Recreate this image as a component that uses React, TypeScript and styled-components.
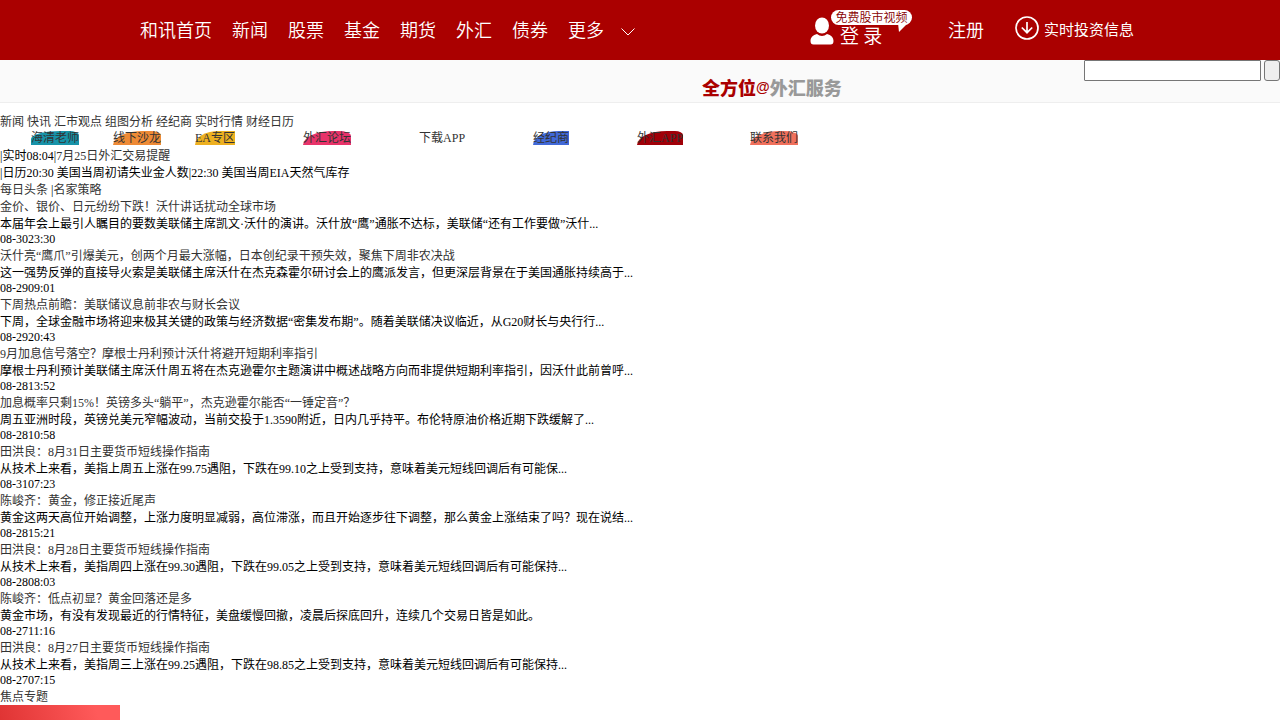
import React from "react";
import styled, { createGlobalStyle } from "styled-components";

const GlobalStyle = createGlobalStyle`
  body {
    margin: 0;
    background: #fff;
    color: #000;
    font: 12px/17px "Liberation Serif", "Noto Sans CJK SC", serif;
  }
  a { color: #333; text-decoration: none; }
  h1, h2, p, ul { margin: 0; padding: 0; font-size: inherit; font-weight: inherit; }
  ul { list-style: none; }
`;

const TopBar = styled.header`
  background: #a00;
  font-family: "Noto Sans CJK SC", sans-serif;
`;

const TopInner = styled.div`
  box-sizing: border-box;
  max-width: 1000px;
  height: 60px;
  margin: 0 auto;
  padding-bottom: 2px;
  display: flex;
  align-items: center;
  justify-content: space-between;
`;

const TopNav = styled.nav`
  display: flex;
  align-items: center;
  gap: 20px;
`;

const TopLink = styled.a`
  color: #fff;
  font-size: 18px;
  line-height: 58px;
  font-weight: 350;
`;

const MoreButton = styled.button`
  display: flex;
  align-items: center;
  gap: 17px;
  padding: 0;
  border: 0;
  background: none;
  color: #fff;
  font: 350 18px/58px "Noto Sans CJK SC", sans-serif;
`;

const Account = styled.div`
  display: flex;
  align-items: center;
  margin-right: 6px;
`;

const Login = styled.a`
  box-sizing: border-box;
  position: relative;
  display: flex;
  align-items: flex-end;
  gap: 6px;
  width: 138px;
  height: 38px;
  padding-bottom: 3px;
  color: #fff;
  font-size: 19px;
  font-weight: 350;
  line-height: 20px;
`;

const Bubble = styled.span`
  position: absolute;
  left: 21px;
  top: 0;
  width: 81px;
  height: 15px;
  border-radius: 8px;
  background: #fff;
  color: #800;
  font-size: 12px;
  line-height: 14px;
  text-align: center;
`;

const BubbleTail = styled.svg`
  position: absolute;
  left: 87px;
  top: 13px;
`;

const Download = styled.a`
  display: flex;
  align-items: center;
  gap: 5px;
  margin-left: 31px;
  color: #fff;
  font-size: 15px;
  line-height: 20px;
`;

const SubBar = styled.div`
  display: flex;
  justify-content: flex-end;
  background: #fafafa;
  border-bottom: 1px solid #eee;
  height: 42px;
`;

const Slogan = styled.h1`
  && { font: 900 18px/26px "Noto Sans CJK SC", serif; }
  display: flex;
  padding-top: 14px;
  color: #a00;
  margin-right: auto;
  margin-left: 702px;
`;

const SloganAt = styled.span`
  font: bold 14px/26px "Liberation Sans", sans-serif;
`;

const SloganRest = styled.span`
  color: #999;
`;

const Search = styled.form`
  display: flex;
  align-items: flex-start;
  gap: 3px;
`;

const SearchInput = styled.input`
  box-sizing: border-box;
  width: 177px;
  height: 21px;
  margin: 0;
  border: 1px solid #767676;
  border-radius: 1px;
`;

const SearchButton = styled.button`
  box-sizing: border-box;
  width: 16px;
  height: 21px;
  padding: 0;
  border: 1px solid #767676;
  border-radius: 3px;
  background: #efefef;
`;

const Main = styled.main`
  padding-top: 11px;
`;

const Row = styled.div`
  min-height: 17px;
`;

const Services = styled.nav`
  display: flex;
  align-items: flex-start;
  height: 17px;
  padding-left: 31px;
`;

const Service = styled.a<{ $tint: string; $curve: string; $gap: number }>`
  height: 14px;
  line-height: 14px;
  margin-right: ${(p) => p.$gap}px;
  background: ${(p) => p.$tint};
  border-radius: ${(p) => p.$curve};
`;

const Time = styled.p`
  padding-bottom: 2px;
  line-height: 13px;
`;

const TopicTitle = styled.h2`
  line-height: 16px;
`;

const TopicBanner = styled.div`
  width: 120px;
  height: 15px;
  background: linear-gradient(75deg, #e03434, #ff5a5a 80%);
`;

const sections = ["和讯首页", "新闻", "股票", "基金", "期货", "外汇", "债券"];
const channels = ["新闻", "快讯", "汇市观点", "组图分析", "经纪商", "实时行情", "财经日历"];

const services = [
  { name: "海清老师", tint: "#1793a9", curve: "30px 10px 0 0 / 8px 4px 0 0", gap: 34 },
  { name: "线下沙龙", tint: "#ee8a35", curve: "30px 10px 0 0 / 14px 4px 0 0", gap: 34 },
  { name: "EA专区", tint: "#edb020", curve: "24px 0 0 0 / 14px 0 0 0", gap: 68 },
  { name: "外汇论坛", tint: "#e8336a", curve: "30px 12px 0 0 / 14px 5px 0 0", gap: 68 },
  { name: "下载APP", tint: "transparent", curve: "0", gap: 68 },
  { name: "经纪商", tint: "#4169d8", curve: "26px 0 0 0 / 14px 0 0 0", gap: 68 },
  { name: "外汇APP", tint: "#a00008", curve: "30px 8px 0 0 / 14px 4px 0 0", gap: 67 },
  { name: "联系我们", tint: "#f0705c", curve: "30px 14px 0 0 / 14px 5px 0 0", gap: 0 },
];

const articles = [
  ["金价、银价、日元纷纷下跌！沃什讲话扰动全球市场", "本届年会上最引人瞩目的要数美联储主席凯文·沃什的演讲。沃什放“鹰”通胀不达标，美联储“还有工作要做”沃什...", "08-3023:30"],
  ["沃什亮“鹰爪”引爆美元，创两个月最大涨幅，日本创纪录干预失效，聚焦下周非农决战", "这一强势反弹的直接导火索是美联储主席沃什在杰克森霍尔研讨会上的鹰派发言，但更深层背景在于美国通胀持续高于...", "08-2909:01"],
  ["下周热点前瞻：美联储议息前非农与财长会议", "下周，全球金融市场将迎来极其关键的政策与经济数据“密集发布期”。随着美联储决议临近，从G20财长与央行行...", "08-2920:43"],
  ["9月加息信号落空？摩根士丹利预计沃什将避开短期利率指引", "摩根士丹利预计美联储主席沃什周五将在杰克逊霍尔主题演讲中概述战略方向而非提供短期利率指引，因沃什此前曾呼...", "08-2813:52"],
  ["加息概率只剩15%！英镑多头“躺平”，杰克逊霍尔能否“一锤定音”？", "周五亚洲时段，英镑兑美元窄幅波动，当前交投于1.3590附近，日内几乎持平。布伦特原油价格近期下跌缓解了...", "08-2810:58"],
  ["田洪良：8月31日主要货币短线操作指南", "从技术上来看，美指上周五上涨在99.75遇阻，下跌在99.10之上受到支持，意味着美元短线回调后有可能保...", "08-3107:23"],
  ["陈峻齐：黄金，修正接近尾声", "黄金这两天高位开始调整，上涨力度明显减弱，高位滞涨，而且开始逐步往下调整，那么黄金上涨结束了吗？现在说结...", "08-2815:21"],
  ["田洪良：8月28日主要货币短线操作指南", "从技术上来看，美指周四上涨在99.30遇阻，下跌在99.05之上受到支持，意味着美元短线回调后有可能保持...", "08-2808:03"],
  ["陈峻齐：低点初显？黄金回落还是多", "黄金市场，有没有发现最近的行情特征，美盘缓慢回撤，凌晨后探底回升，连续几个交易日皆是如此。", "08-2711:16"],
  ["田洪良：8月27日主要货币短线操作指南", "从技术上来看，美指周三上涨在99.25遇阻，下跌在98.85之上受到支持，意味着美元短线回调后有可能保持...", "08-2707:15"],
];

export default function App() {
  return (
    <>
      <GlobalStyle />
      <TopBar>
        <TopInner>
          <TopNav>
            {sections.map((s) => (
              <TopLink href="#" key={s}>{s}</TopLink>
            ))}
            <MoreButton type="button">
              更多
              <svg width="14" height="13" viewBox="0 0 14 13" fill="none" stroke="#fff">
                <path d="M.5 5.500 7 12l6.500-6.500" />
              </svg>
            </MoreButton>
          </TopNav>
          <Account>
            <Login href="#">
              <svg width="24" height="28" viewBox="0 0 24 28" fill="#fff">
                <ellipse cx="12" cy="8.500" rx="7" ry="8" />
                <path d="M7 17c3 2.500 7 2.500 10 0 4 1 6.500 3.500 6.500 7 0 2.500-1 3.500-3 3.500H3.500C1.500 27.500.5 26.500.5 24c0-3.500 2.500-6 6.500-7Z" />
              </svg>
              登 录
              <Bubble>免费股市视频</Bubble>
              <BubbleTail width="12" height="9" viewBox="0 0 12 9" fill="#fff">
                <path d="M1 0h10L2 9Z" />
              </BubbleTail>
            </Login>
            <TopLink href="#">注册</TopLink>
            <Download href="#">
              <svg width="24" height="26" viewBox="0 0 24 26" fill="none" stroke="#fff" strokeWidth="1.700">
                <circle cx="12" cy="12" r="11" />
                <path d="M12 6v11M6.800 11.500 12 16.700l5.200-5.200" />
              </svg>
              实时投资信息
            </Download>
          </Account>
        </TopInner>
      </TopBar>
      <SubBar>
        <Slogan>全方位<SloganAt>@</SloganAt><SloganRest>外汇服务</SloganRest></Slogan>
        <Search>
          <SearchInput type="text" aria-label="搜索" />
          <SearchButton type="button" aria-label="提交" />
        </Search>
      </SubBar>
      <Main>
        <Row as="nav">
          {channels.map((c) => (
            <React.Fragment key={c}><a href="#">{c}</a> </React.Fragment>
          ))}
        </Row>
        <Services>
          {services.map((s) => (
            <Service href="#" key={s.name} $tint={s.tint} $curve={s.curve} $gap={s.gap}>{s.name}</Service>
          ))}
        </Services>
        <Row>|实时08:04|<a href="#">7月25日外汇交易提醒</a></Row>
        <Row>|日历20:30 美国当周初请失业金人数|22:30 美国当周EIA天然气库存</Row>
        <Row><a href="#">每日头条</a> |<a href="#">名家策略</a></Row>
        <ul>
          {articles.map(([title, summary, time]) => (
            <li key={title}>
              <h2><a href="#">{title}</a></h2>
              <p>{summary}</p>
              <Time>{time}</Time>
            </li>
          ))}
        </ul>
        <TopicTitle><a href="#">焦点专题</a></TopicTitle>
        <TopicBanner />
      </Main>
    </>
  );
}
